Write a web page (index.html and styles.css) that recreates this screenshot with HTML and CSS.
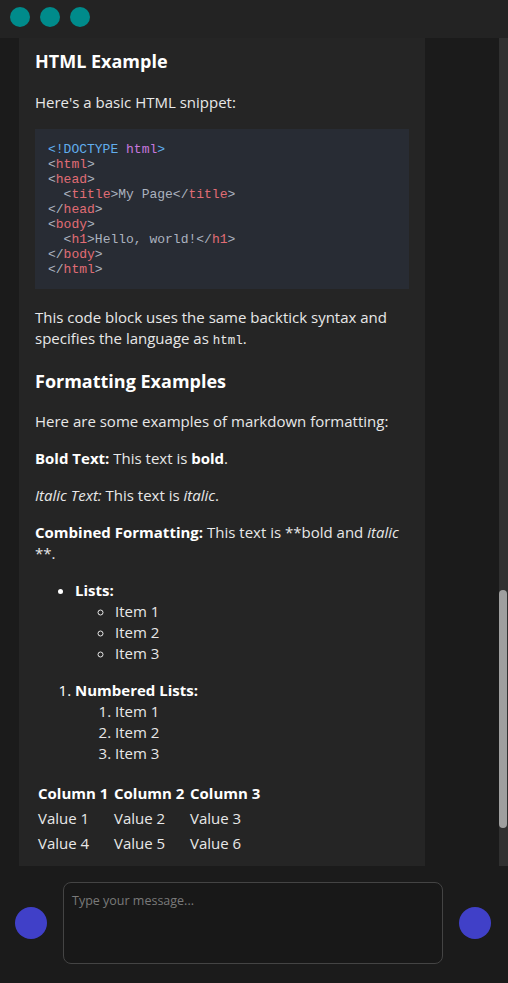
FILE: index.html
```html
<!DOCTYPE html>
<html>
<head>
<meta charset="utf-8">
<link rel="stylesheet" href="styles.css">
</head>
<body>
<div class="app">
  <header class="titlebar">
    <span class="dot"></span><span class="dot"></span><span class="dot"></span>
  </header>
  <main class="chat">
    <div class="messages">
      <div class="card">
        <h3 class="first">HTML Example</h3>
        <p>Here's a basic HTML snippet:</p>
<pre class="code"><span class="kw">&lt;!DOCTYPE</span> <span class="at">html</span><span class="kw">&gt;</span>
<span class="br">&lt;</span><span class="tg">html</span><span class="br">&gt;</span>
<span class="br">&lt;</span><span class="tg">head</span><span class="br">&gt;</span>
  <span class="br">&lt;</span><span class="tg">title</span><span class="br">&gt;</span>My Page<span class="br">&lt;/</span><span class="tg">title</span><span class="br">&gt;</span>
<span class="br">&lt;/</span><span class="tg">head</span><span class="br">&gt;</span>
<span class="br">&lt;</span><span class="tg">body</span><span class="br">&gt;</span>
  <span class="br">&lt;</span><span class="tg">h1</span><span class="br">&gt;</span>Hello, world!<span class="br">&lt;/</span><span class="tg">h1</span><span class="br">&gt;</span>
<span class="br">&lt;/</span><span class="tg">body</span><span class="br">&gt;</span>
<span class="br">&lt;/</span><span class="tg">html</span><span class="br">&gt;</span></pre>
        <p>This code block uses the same backtick syntax and specifies the language as <code>html</code>.</p>
        <h3>Formatting Examples</h3>
        <p>Here are some examples of markdown formatting:</p>
        <p><strong>Bold Text:</strong> This text is <strong>bold</strong>.</p>
        <p><em>Italic Text:</em> This text is <em>italic</em>.</p>
        <p><strong>Combined Formatting:</strong> This text is **bold and <em>italic</em> **.</p>
        <ul class="list">
          <li><strong>Lists:</strong>
            <ul class="sub">
              <li>Item 1</li>
              <li>Item 2</li>
              <li>Item 3</li>
            </ul>
          </li>
        </ul>
        <ol class="list">
          <li><strong>Numbered Lists:</strong>
            <ol class="sub">
              <li>Item 1</li>
              <li>Item 2</li>
              <li>Item 3</li>
            </ol>
          </li>
        </ol>
        <table class="tbl">
          <thead>
            <tr><th>Column 1</th><th>Column 2</th><th>Column 3</th></tr>
          </thead>
          <tbody>
            <tr><td>Value 1</td><td>Value 2</td><td>Value 3</td></tr>
            <tr><td>Value 4</td><td>Value 5</td><td>Value 6</td></tr>
          </tbody>
        </table>
      </div>
    </div>
    <div class="scrollbar"><div class="thumb"></div></div>
  </main>
  <footer class="composer">
    <span class="avatar"></span>
    <div class="input"><span class="placeholder">Type your message...</span></div>
    <span class="avatar"></span>
  </footer>
</div>
</body>
</html>
```
FILE: styles.css
```css
* { box-sizing: border-box; }
html, body { margin: 0; padding: 0; }
body {
  background: #1b1b1b;
  font-family: "Open Sans", "Noto Sans", sans-serif;
  color: #e8e8e8;
  width: 508px;
  height: 983px;
  overflow: hidden;
}
.app {
  display: flex;
  flex-direction: column;
  height: 983px;
}
.titlebar {
  height: 38px;
  background: #232323;
  display: flex;
  align-items: center;
  gap: 10px;
  padding: 0 0 4px 10px;
  flex: none;
}
.dot {
  width: 20px;
  height: 20px;
  border-radius: 50%;
  background: #008b8b;
}
.chat {
  height: 828px;
  flex: none;
  display: flex;
  background: #1b1b1b;
  overflow: hidden;
}
.messages {
  flex: 1;
  overflow: hidden;
  padding-left: 19px;
}
.card {
  width: 406px;
  background: #252525;
  padding: 11px 16px 12px;
  font-size: 15px;
  line-height: 21px;
}
.card h3 {
  font-size: 18px;
  line-height: 25px;
  font-weight: 700;
  color: #fff;
  margin: 19.7px 0 17.7px;
}
.card h3.first { margin: 0 0 18px; }
.card p { margin: 0 0 16px; }
.card strong { color: #fff; font-weight: 700; }
.code {
  background: #282c34;
  margin: 0 0 18px;
  padding: 13px 13px 12px;
  font-family: "Liberation Mono", "Courier New", monospace;
  font-size: 13px;
  line-height: 15px;
  color: #abb2bf;
}
.kw { color: #61aeee; }
.at { color: #c678dd; }
.br { color: #abb2bf; }
.tg { color: #e06c75; }
code {
  font-family: "Liberation Mono", "Courier New", monospace;
  font-size: 12.5px;
  line-height: 15px;
  color: #e8e8e8;
}
.list { margin: 0 0 16px; padding-left: 40px; }
.sub { margin: 0; padding-left: 40px; }
.list > li::marker { color: #fff; }
ul.sub { list-style-type: circle; }
.tbl {
  border-spacing: 2px;
  margin-top: 1px;
}
.tbl th, .tbl td {
  padding: 1px;
  width: 74px;
  text-align: left;
  line-height: 21px;
}
.tbl th { color: #fff; font-weight: 700; }
.scrollbar {
  width: 9px;
  flex: none;
  background: #303030;
  padding-top: 552px;
}
.thumb {
  width: 8px;
  height: 238px;
  background: #9f9f9f;
  border-radius: 4px;
}
.composer {
  flex: 1;
  display: flex;
  align-items: center;
  gap: 16px;
  padding: 0 17px 4px 15px;
  background: #1b1b1b;
}
.avatar {
  width: 32px;
  height: 32px;
  border-radius: 50%;
  background: #4040c8;
  flex: none;
}
.input {
  flex: 1;
  height: 82px;
  border: 1px solid #444;
  border-radius: 8px;
  background: #181818;
  padding: 9px 8px;
  font-size: 12.5px;
  line-height: 18px;
}
.placeholder {
  font-size: 12.5px;
  color: #7a7a7a;
  line-height: 18px;
}
```
